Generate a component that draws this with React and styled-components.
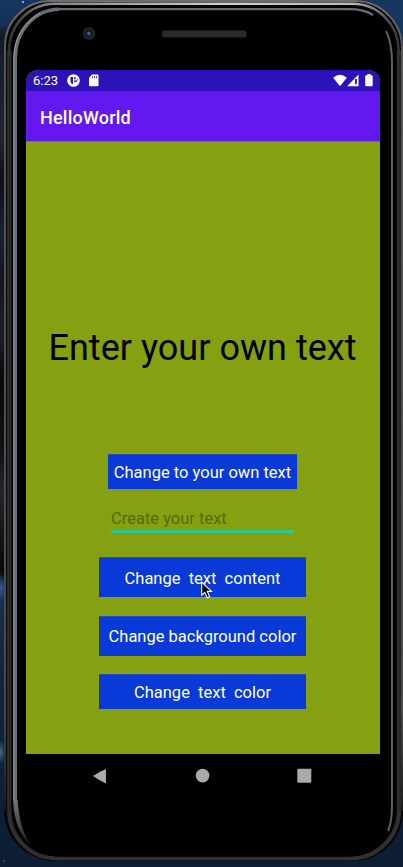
import React from "react";
import styled, { createGlobalStyle } from "styled-components";

const Global = createGlobalStyle`
  * { box-sizing: border-box; }
  body { margin: 0; overflow: hidden; font-family: Roboto, "Liberation Sans", sans-serif; }
`;

const Desktop = styled.main`
  position: relative;
  width: 403px;
  height: 867px;
  overflow: hidden;
  background:
    radial-gradient(circle at 23px 2px, #8aa6cb 0 0.7px, transparent 1px),
    radial-gradient(circle at 4px 861px, #9aa6b8 0 0.5px, transparent 0.8px),
    radial-gradient(ellipse 6px 12px at 0 752px, #45699a, transparent),
    radial-gradient(ellipse 5px 14px at 1px 588px, #365b8c, transparent),
    linear-gradient(90deg, transparent 350px, #17365f 351px) 0 0 / 403px 46px no-repeat,
    linear-gradient(180deg, #173560 0, #16315a 24px, #151b28 34px, #171e2c 70px, #20262f 140px, #0b1019 180px, #1a2230 230px, #11161f 280px, #1a2027 335px, #07090d 380px, #101116 450px, #23252b 490px, #08090c 570px, #183052 590px, #13233b 680px, #0e2038 780px, #0d1d33 867px);
`;

const Bezel = styled.svg`
  position: absolute;
  inset: 0;
  width: 403px;
  height: 867px;
`;

const Device = styled.section`
  position: relative;
  width: 354px;
  margin: 70px 0 0 26px;
`;

const Screen = styled.div`
  height: 684px;
  display: flex;
  flex-direction: column;
  background: #85a011;
  border-radius: 12px 12px 0 0;
  overflow: hidden;
`;

const StatusBar = styled.header`
  height: 21px;
  flex: none;
  display: flex;
  align-items: center;
  padding: 0 7px;
  background: #2d12b9;
  color: #fff;
`;

const Clock = styled.span`
  width: 34px;
  font-size: 13px;
  line-height: 21px;
  white-space: nowrap;
`;

const StatusIcon = styled.svg`
  display: block;
  flex: none;
  width: ${(p) => p.$w}px;
  height: 13px;
  margin-left: ${(p) => p.$gap || 0}px;
`;

const Spacer = styled.span`
  flex: 1;
`;

const AppBar = styled.div`
  height: 50px;
  flex: none;
  padding: 3px 14px 0;
  display: flex;
  align-items: center;
  background: #6218ee;
  color: #fff;
  font-size: 18px;
  font-weight: 500;
  letter-spacing: 0.22px;
`;

const Content = styled.div`
  flex: 1;
  display: flex;
  flex-direction: column;
  align-items: center;
  padding-right: 1px;
  border-top: 1px solid #748430;
`;

const Heading = styled.h1`
  margin: 182px 0 0;
  height: 48px;
  font-size: 36px;
  font-weight: 400;
  line-height: 48px;
  letter-spacing: 0.03px;
  white-space: nowrap;
  color: #000;
`;

const Button = styled.button`
  width: ${(p) => p.$w}px;
  height: ${(p) => p.$h}px;
  margin: ${(p) => p.$top}px 0 0;
  padding: ${(p) => p.$drop || 0}px 0 0;
  border: 0 solid #2a50b8;
  border-width: 1px 0 0;
  background: #0939d6;
  color: #fff;
  font: 400 16.5px Roboto, "Liberation Sans", sans-serif;
  white-space: pre;
`;

const Field = styled.input`
  width: 183px;
  height: 27px;
  margin: 17px 0 0;
  padding: 0;
  border: 0;
  border-bottom: 3px solid #2fc590;
  border-radius: 0;
  outline: 0;
  background: transparent;
  font: 400 16.5px Roboto, "Liberation Sans", sans-serif;
  &::placeholder { color: #576a0b; opacity: 1; }
`;

const NavBar = styled.nav`
  height: 44px;
  display: flex;
  align-items: center;
  justify-content: space-between;
  padding: 0 68px 0 66px;
`;

const NavIcon = styled.svg`
  width: 16px;
  height: 16px;
  fill: #aaaaac;
`;

const Cursor = styled.svg`
  position: absolute;
  left: 175px;
  top: 511px;
  width: 12px;
  height: 18px;
`;

function PhoneBezel() {
  return (
    <Bezel viewBox="0 0 403 867" fill="none" aria-hidden="true">
      <defs>
        <linearGradient id="rim" x1="0" y1="0" x2="0" y2="867" gradientUnits="userSpaceOnUse">
          <stop offset="0" stopColor="#6d6d6d" />
          <stop offset=".07" stopColor="#555" />
          <stop offset=".82" stopColor="#4b4b4b" />
          <stop offset=".94" stopColor="#171717" />
          <stop offset="1" stopColor="#050505" />
        </linearGradient>
        <linearGradient id="shine" x1="9" y1="0" x2="400" y2="0" gradientUnits="userSpaceOnUse">
          <stop offset="0" stopColor="#333" />
          <stop offset=".1" stopColor="#858585" />
          <stop offset=".55" stopColor="#cfcfcf" />
          <stop offset=".88" stopColor="#b8b8b8" />
          <stop offset="1" stopColor="#333" />
        </linearGradient>
        <linearGradient id="tail" x1="0" y1="800" x2="0" y2="846" gradientUnits="userSpaceOnUse">
          <stop stopColor="#72767c" />
          <stop offset="1" stopColor="#1b1b1d" />
        </linearGradient>
      </defs>
      <path d="M4 46A46 46 0 0 1 50 0H355A48 48 0 0 1 403 48V811A50 50 0 0 1 353 861H55A51 51 0 0 1 4 810Z" fill="#050505" />
      <path d="M5 811V46A45 45 0 0 1 50 1H355A47 47 0 0 1 402 48V811" stroke="url(#rim)" strokeWidth="2" />
      <path d="M9.2 51V811A47 47 0 0 0 56 858.3H350A48 48 0 0 0 399 810V51" stroke="#303030" strokeWidth="4.2" />
      <path d="M9.8 54V811M400 54V811" stroke="#222" strokeWidth="1.2" />
      <path d="M9 56V51A46 47 0 0 1 54 3.7H352A46 46 0 0 1 398.5 52" stroke="url(#shine)" strokeWidth="2.4" />
      <path d="M12.3 60V806A48 50 0 0 0 60 856.8H347A48 48 0 0 0 395.5 808V54A47 47 0 0 0 350 6H57A45 50 0 0 0 12.3 60Z" fill="#000" />
      <path d="M15.3 801V58A44 48.5 0 0 1 59 9.2" stroke="#696e74" strokeWidth="3.6" />
      <path d="M59 9.2H348Q364 9 373 15" stroke="#6b6e73" strokeWidth="2.2" />
      <path d="M13.8 801V58A45 50 0 0 1 40 13" stroke="#9ca0a4" strokeWidth="1" />
      <path d="M13.1 800Q14 831 31 845Q20 831 17.5 800Z" fill="url(#tail)" />
      <path d="M386 31Q392 42 392 64V805Q392 822 388 831" stroke="#5d6065" strokeWidth="2" />
      <circle cx="89" cy="33.5" r="6.3" fill="#242528" />
      <circle cx="89" cy="33.5" r="4" fill="#101722" />
      <circle cx="89" cy="33.7" r="2.3" fill="#263e67" />
      <circle cx="88.5" cy="33" r="1" fill="#4f78ad" />
      <rect x="162" y="30.5" width="84.5" height="7" rx="2.5" fill="#292929" />
      <path d="M164 32H245M164 35H245" stroke="#35353b" strokeDasharray="1 3" />
    </Bezel>
  );
}

export default function App() {
  return (
    <Desktop>
      <Global />
      <PhoneBezel />
      <Device>
        <Screen>
          <StatusBar>
            <Clock>6:23</Clock>
            <StatusIcon $w={13} viewBox="0 0 13 13">
              <circle cx="6.5" cy="6.5" r="6.3" fill="#fff" />
              <path d="M3.5 3H6V10.2Q3.5 9.7 3.5 7.5ZM7.1 3H8.5V5.2H7.1ZM9.5 3.2Q11 5 9.2 6.6H7.1V8.2Q10.8 8 10.6 5Z" fill="#2d12b9" />
            </StatusIcon>
            <StatusIcon $w={10} $gap={9} viewBox="0 0 10 13">
              <path d="M3 .5H8.5Q9.5 .5 9.5 1.5V11.3Q9.5 12.3 8.5 12.3H1Q0 12.3 0 11.3V4Z" fill="#fff" />
              <path d="M3.5 2.3V4.3M5.5 2.3V4.3M7.5 2.3V4.3" stroke="#2d12b9" strokeWidth=".9" />
            </StatusIcon>
            <Spacer />
            <StatusIcon $w={14} viewBox="0 0 14 13">
              <path d="M.2 3.7Q7-2.2 13.8 3.7L7 12.3Z" fill="#fff" />
            </StatusIcon>
            <StatusIcon $w={12} viewBox="0 0 12 13">
              <path d="M.1 12.2L11.5.6V12.2Z" fill="#fff" />
              <path d="M8 5H9.9V10.3H8Z" fill="#2d12b9" />
            </StatusIcon>
            <StatusIcon $w={8} $gap={6} viewBox="0 0 8 13">
              <path d="M2.3 0H5.5V1.2H6.7Q7.7 1.2 7.7 2.2V11.3Q7.7 12.3 6.7 12.3H1.2Q.2 12.3.2 11.3V2.2Q.2 1.2 1.2 1.2H2.3Z" fill="#fff" />
            </StatusIcon>
          </StatusBar>
          <AppBar>HelloWorld</AppBar>
          <Content>
            <Heading>Enter your own text</Heading>
            <Button $w={189} $h={35} $top={82}>Change to your own text</Button>
            <Field aria-label="Your text" placeholder="Create your text" />
            <Button $w={207} $h={40} $top={24} $drop={2}>{"Change  text  content"}</Button>
            <Button $w={207} $h={40} $top={19}>Change background color</Button>
            <Button $w={207} $h={35} $top={18}>{"Change  text  color"}</Button>
          </Content>
        </Screen>
        <NavBar>
          <NavIcon viewBox="0 0 16 16"><path d="M14 1V15.5Q6.5 12 1 8Q6.5 4 14 1Z" /></NavIcon>
          <NavIcon viewBox="0 0 16 16"><circle cx="8.6" cy="7.6" r="6.8" /></NavIcon>
          <NavIcon viewBox="0 0 16 16"><rect x="1.3" y=".8" width="14" height="14" rx="1.4" /></NavIcon>
        </NavBar>
        <Cursor viewBox="0 0 12 18">
          <path d="M.7 1V14.2L3.8 11.4L6.2 16.8L8.7 15.7L6.3 10.4H10.5Z" fill="#000" stroke="#fff" strokeWidth="1.1" />
        </Cursor>
      </Device>
    </Desktop>
  );
}
